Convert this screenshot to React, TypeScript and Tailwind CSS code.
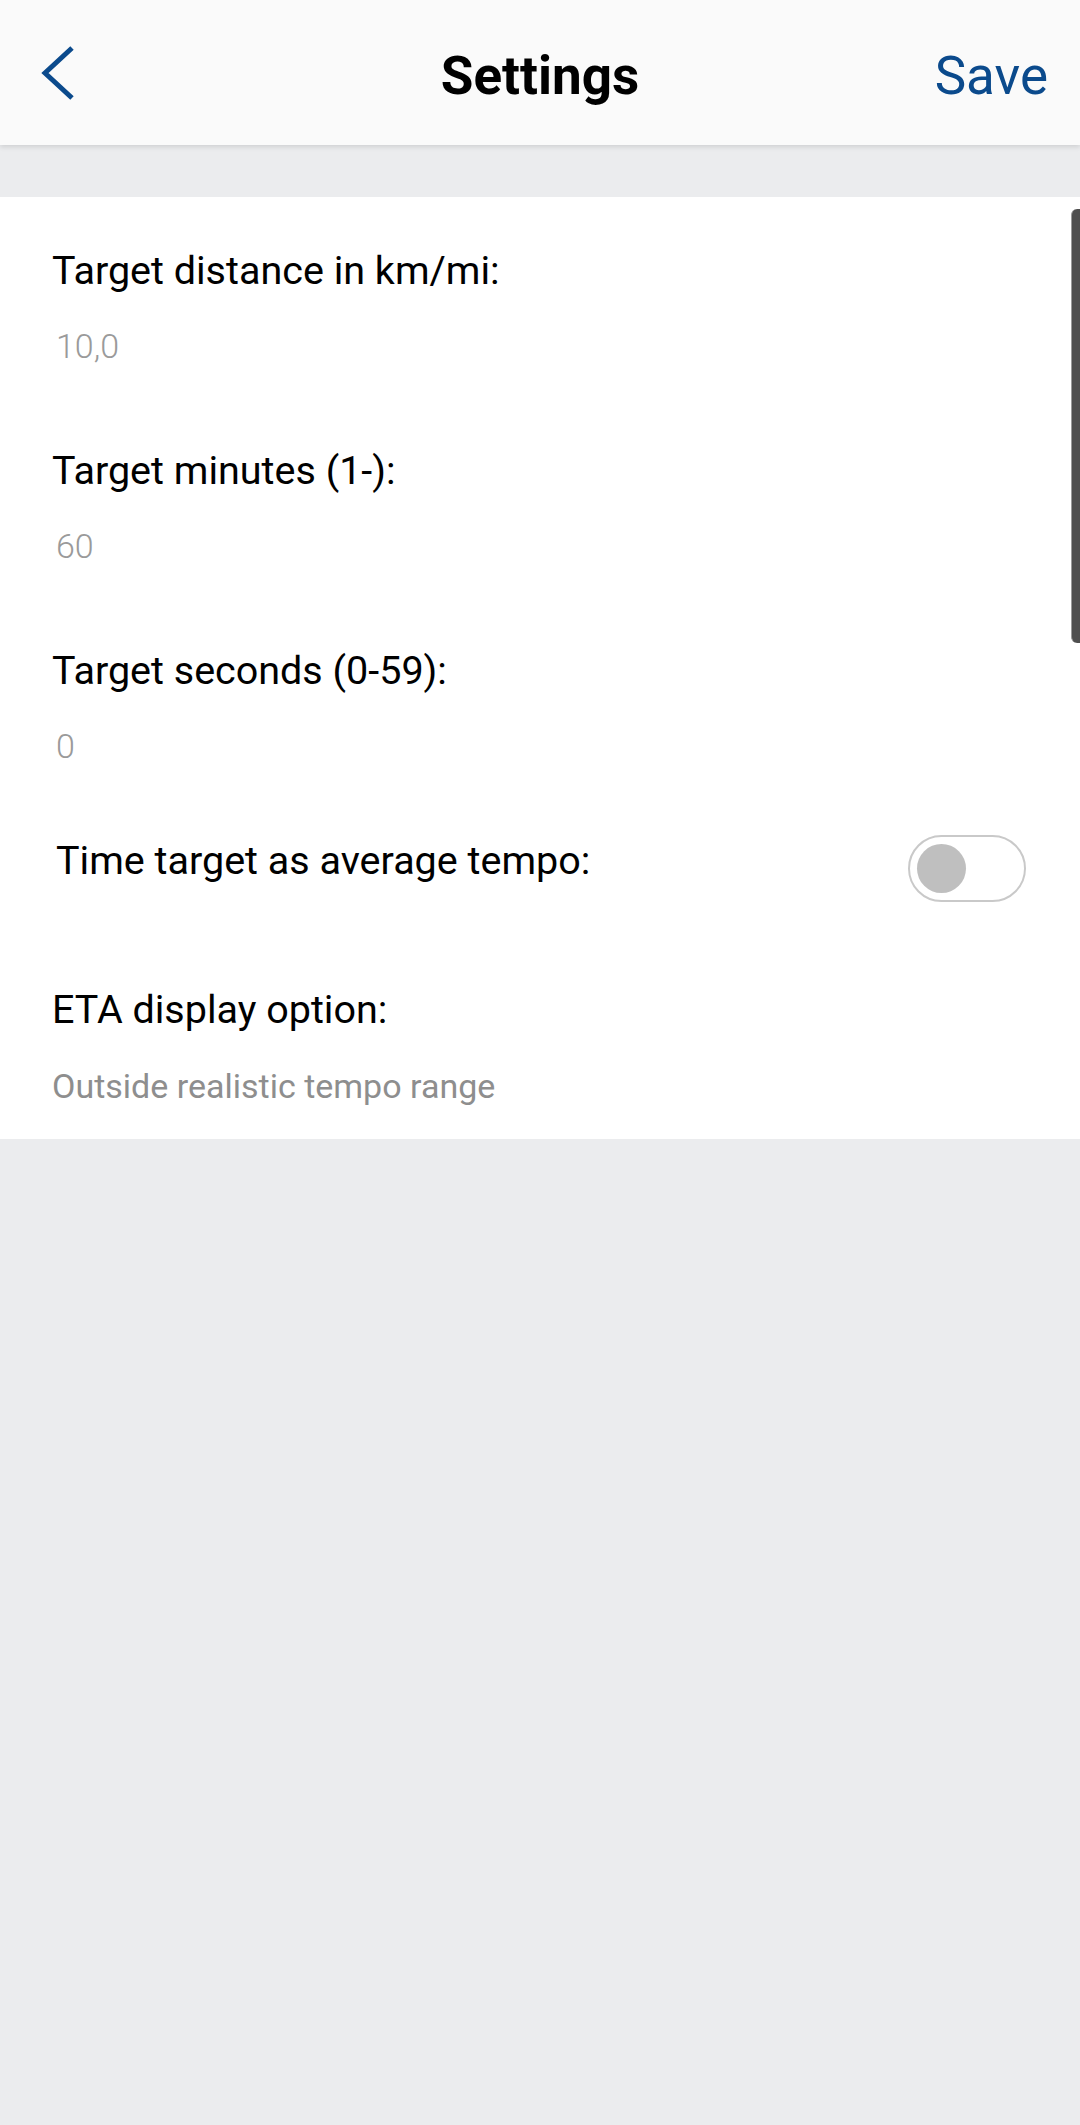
import React from "react";

const font = { fontFamily: "Roboto, 'Noto Sans', sans-serif" };

function Label({ children }: { children: React.ReactNode }) {
  return <div className="text-[39.5px] leading-[48px] text-black">{children}</div>;
}

function Value({ children }: { children: React.ReactNode }) {
  return (
    <div className="mt-[30px] ml-[4px] text-[34px] leading-[42px] font-light text-[#9a9a9a]">{children}</div>
  );
}

export default function App() {
  return (
    <div className="relative w-[1080px] h-[2125px] bg-[#ebecee] overflow-hidden" style={font}>
      <header className="relative z-10 h-[145px] bg-[#fafafa] shadow-[0_2px_5px_rgba(0,0,0,0.12)] flex items-center justify-between pl-[40px] pr-[32px]">
        <button className="w-[60px] h-[60px] flex items-center">
          <svg width="36" height="56" viewBox="0 0 36 56" fill="none">
            <path d="M32 3 L5 28 L32 53" stroke="#0b4a8c" strokeWidth="5" strokeLinecap="butt" strokeLinejoin="miter" />
          </svg>
        </button>
        <div className="absolute left-0 right-0 top-0 h-[145px] flex items-center justify-center pointer-events-none">
          <span className="mt-[8px] text-[53px] font-bold text-black leading-none">Settings</span>
        </div>
        <span className="mt-[8px] text-[53px] text-[#0b4a8c] leading-none">Save</span>
      </header>

      <div className="h-[52px]" />

      <main className="bg-white pt-[50px] pb-[33px] pl-[52px] pr-[54px]">
        <Label>Target distance in km/mi:</Label>
        <Value>10,0</Value>

        <div className="mt-[80px]">
          <Label>Target minutes (1-):</Label>
          <Value>60</Value>
        </div>

        <div className="mt-[80px]">
          <Label>Target seconds (0-59):</Label>
          <Value>0</Value>
        </div>

        <div className="mt-[68px] flex items-start justify-between pl-[4px]">
          <div className="mt-[2px]">
            <Label>Time target as average tempo:</Label>
          </div>
          <div className="w-[118px] h-[67px] rounded-full border-2 border-[#c9c9c9] bg-white flex items-center pl-[7px]">
            <div className="w-[49px] h-[49px] rounded-full bg-[#bfbfbf]" />
          </div>
        </div>

        <div className="mt-[84px]">
          <Label>ETA display option:</Label>
          <div className="mt-[32px] text-[34px] leading-[40px] text-[#8e8e8e]">Outside realistic tempo range</div>
        </div>
      </main>

      <div className="absolute right-0 top-[209px] w-[9px] h-[434px] rounded-l-[6px] bg-[#4f4f4f] border-l border-[#9a9a9a]" />
    </div>
  );
}
